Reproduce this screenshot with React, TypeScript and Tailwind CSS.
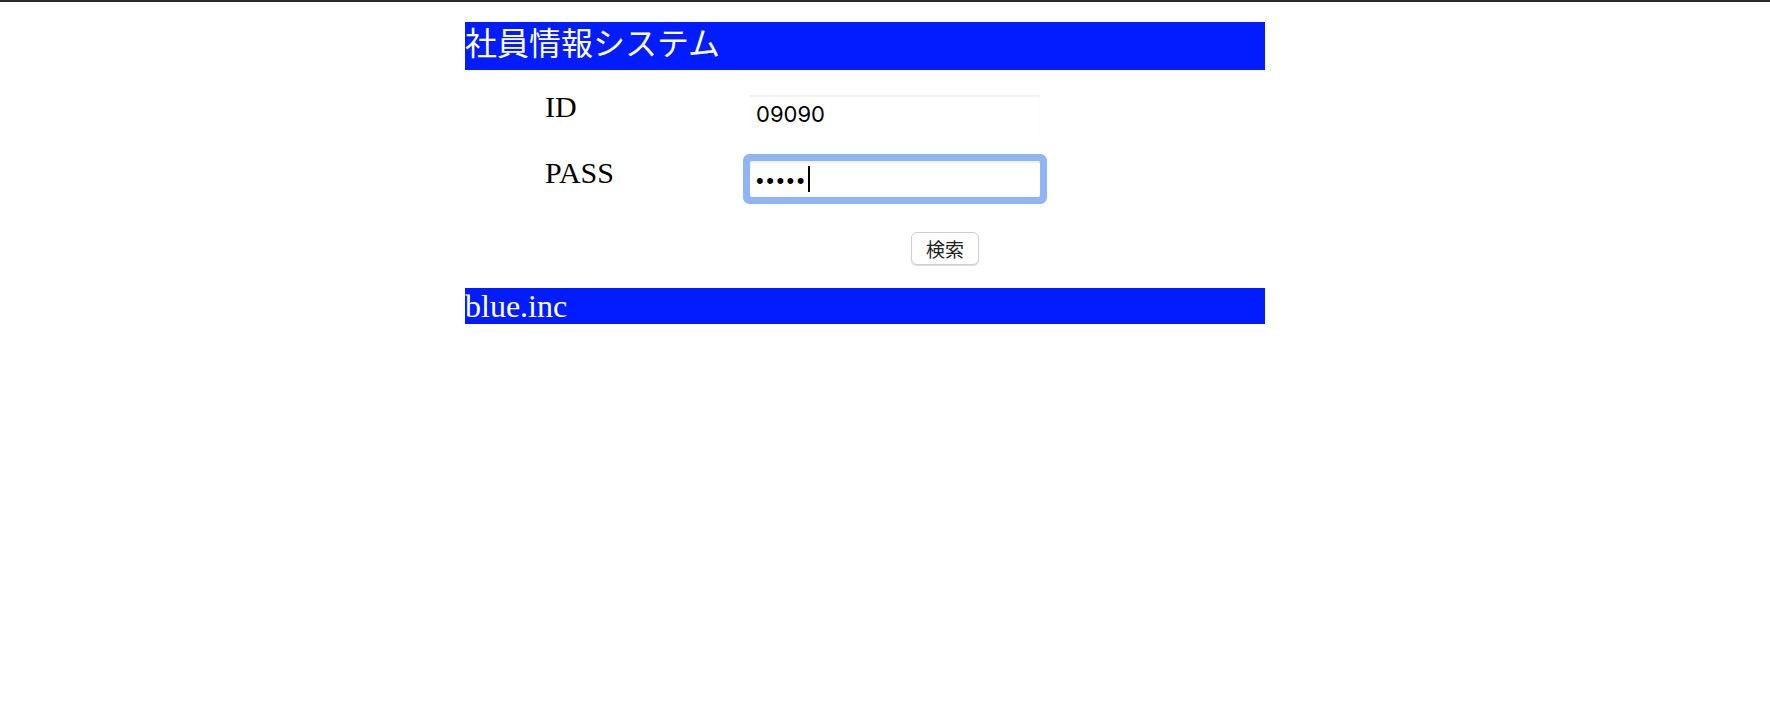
import React from 'react';

const serif = { fontFamily: '"Liberation Serif", "Noto Sans CJK JP", serif' };

const LoginRow: React.FC<{ label: string; children: React.ReactNode }> = ({ label, children }) => (
  <div className="flex h-[66px] items-start pl-[80px]">
    <div className="w-[205px] text-[30px] leading-[30px] text-black" style={serif}>
      {label}
    </div>
    <div className="mt-[3px]">{children}</div>
  </div>
);

const App: React.FC = () => {
  return (
    <div className="min-h-screen bg-white">
      <div className="h-[2px] bg-[#2b2b2b]" />
      <div className="ml-[465px] w-[800px] pt-[20px]">
        <header
          className="h-[48px] bg-[#001cff] text-[32px] leading-[45px] text-white"
          style={serif}
        >
          社員情報システム
        </header>

        <form className="pt-[22px]" onSubmit={(e) => e.preventDefault()}>
          <LoginRow label="ID">
            <input
              type="text"
              readOnly
              value="09090"
              className="h-[37px] w-[290px] border-0 bg-white pl-[6px] text-[22px] text-black shadow-[inset_0_2px_2px_rgba(0,0,0,0.06)] outline-none"
              style={{ fontFamily: 'Inter, "Liberation Sans", sans-serif' }}
            />
          </LoginRow>
          <LoginRow label="PASS">
            <div className="flex h-[36px] w-[290px] items-center rounded-[2px] bg-white pl-[6px] shadow-[inset_0_2px_2px_rgba(0,0,0,0.06),0_0_0_7px_#8fb5f4]">
              <span
                className="mt-[4px] text-[22px] leading-none tracking-[2.5px] text-black"
                style={{ fontFamily: '"Liberation Sans", sans-serif' }}
              >
                •••••
              </span>
              <span className="ml-[1px] h-[26px] w-[2px] bg-black" />
            </div>
          </LoginRow>

          <div className="mt-[8px] pl-[446px]">
            <button
              type="submit"
              className="h-[33px] w-[68px] rounded-[6px] border border-[#cfcfcf] bg-white text-[19px] leading-none text-[#222] shadow-[0_1px_1px_rgba(0,0,0,0.15)]"
              style={{ fontFamily: '"Noto Sans CJK JP", sans-serif' }}
            >
              検索
            </button>
          </div>
        </form>

        <footer
          className="mt-[23px] h-[36px] bg-[#001cff] text-[32px] leading-[36px] text-white"
          style={serif}
        >
          blue.inc
        </footer>
      </div>
    </div>
  );
};

export default App;
